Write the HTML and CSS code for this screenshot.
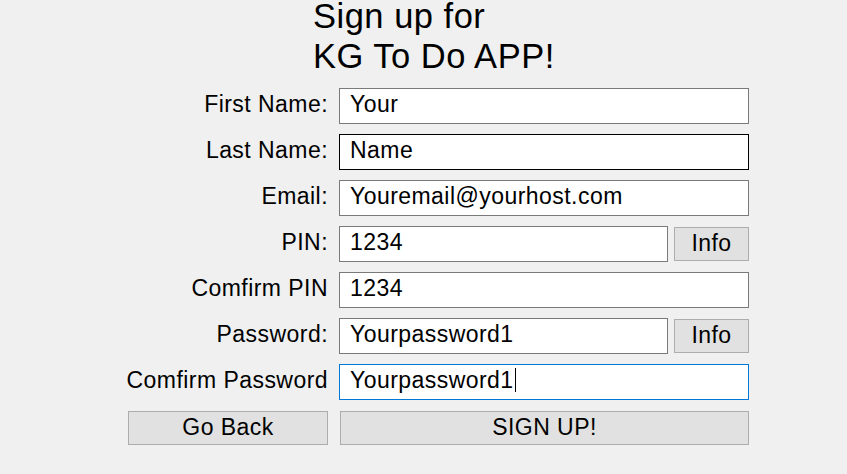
FILE: index.html
```html
<!DOCTYPE html>
<html lang="en">
<head>
<meta charset="utf-8">
<title>Sign up for KG To Do APP!</title>
<link rel="stylesheet" href="styles.css">
</head>
<body>
<main class="page">
  <h1 class="title"><span class="title-line">Sign up for</span><span class="title-line title-line-2">KG To Do APP!</span></h1>
  <form class="form">
    <label class="label" for="first">First Name:</label>
    <input class="field" id="first" type="text" value="Your">

    <label class="label" for="last">Last Name:</label>
    <input class="field field-hover" id="last" type="text" value="Name">

    <label class="label" for="email">Email:</label>
    <input class="field" id="email" type="text" value="Youremail@yourhost.com">

    <label class="label" for="pin">PIN:</label>
    <div class="split">
      <input class="field" id="pin" type="text" value="1234">
      <button class="btn btn-info" type="button">Info</button>
    </div>

    <label class="label" for="pin2">Comfirm PIN</label>
    <input class="field" id="pin2" type="text" value="1234">

    <label class="label" for="pw">Password:</label>
    <div class="split">
      <input class="field" id="pw" type="text" value="Yourpassword1">
      <button class="btn btn-info" type="button">Info</button>
    </div>

    <span class="label">Comfirm Password</span>
    <div class="field field-focus" role="textbox">Yourpassword1<span class="caret"></span></div>

    <button class="btn btn-action" type="button">Go Back</button>
    <button class="btn btn-action" type="button">SIGN UP!</button>
  </form>
</main>
</body>
</html>
```

FILE: styles.css
```css
html, body {
  margin: 0;
  padding: 0;
  background: #f0f0f0;
}

body {
  width: 847px;
  height: 474px;
  overflow: hidden;
  font-family: "Liberation Sans", Arial, sans-serif;
  color: #000;
}

.page {
  padding-left: 128px;
}

.title {
  margin: 0 0 16px 185px;
  font-weight: normal;
  font-size: 34.5px;
  letter-spacing: 0.5px;
}

.title-line {
  display: block;
  line-height: 32px;
}

.title-line-2 {
  margin-top: 8px;
}

.form {
  display: grid;
  grid-template-columns: 200px 410px;
  column-gap: 11px;
  row-gap: 10px;
  grid-auto-rows: 36px;
  font-size: 23px;
  letter-spacing: 0.45px;
}

.label {
  display: flex;
  align-items: center;
  justify-content: flex-end;
  padding-bottom: 3px;
  white-space: nowrap;
  box-sizing: border-box;
}

.field {
  box-sizing: border-box;
  height: 36px;
  width: 100%;
  margin: 0;
  padding: 0 10px 4px 10px;
  border: 1px solid #7a7a7a;
  border-radius: 0;
  background: #fff;
  font: inherit;
  letter-spacing: inherit;
  color: #000;
  outline: none;
}

.field-hover {
  border-color: #000;
}

div.field {
  display: flex;
  align-items: center;
  white-space: nowrap;
}

.field-focus {
  border-color: #0078d7;
}

.caret {
  display: inline-block;
  width: 1px;
  height: 24px;
  margin-left: 1px;
  background: #000;
}

.split {
  display: flex;
  align-items: center;
  gap: 6px;
}

.split .field {
  flex: 1;
  min-width: 0;
}

.btn {
  box-sizing: border-box;
  margin: 0;
  border: 1px solid #adadad;
  border-radius: 0;
  background: #e1e1e1;
  font: inherit;
  letter-spacing: inherit;
  color: #000;
  padding: 0 0 2px 0;
}

.btn-info {
  flex: 0 0 75px;
  height: 34px;
  padding-bottom: 1px;
}

.btn-action {
  height: 34px;
  margin-top: 1px;
  width: 100%;
}

.btn-action:last-child {
  width: 409px;
  justify-self: end;
  margin-left: 1px;
}
```
